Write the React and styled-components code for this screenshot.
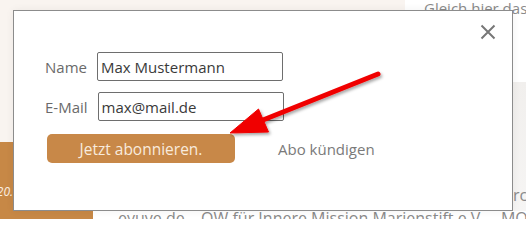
import React from 'react'
import styled, { createGlobalStyle } from 'styled-components'

const GlobalStyle = createGlobalStyle`
    html, body {
        margin: 0;
        padding: 0;
        background: #ffffff;
    }
    body {
        font-family: "Open Sans", "Liberation Sans", sans-serif;
    }
`

const App = () => {
    return (
        <>
            <GlobalStyle />
            <Page>
                <Main>
                    <LeftPane>
                        <OrangeBlock>
                            <Caption><span>Stand 2020.</span></Caption>
                        </OrangeBlock>
                    </LeftPane>
                    <RightPane>
                        <Teaser>Gleich hier das</Teaser>
                        <GreyBox><span>rchiv</span></GreyBox>
                    </RightPane>
                </Main>
                <Footer>
                    <FootOrange />
                    <FootText>eyuve.de – OW für Innere Mission Marienstift e.V. – MOS</FootText>
                </Footer>

                <Modal>
                    <CloseButton aria-label="Schließen">
                        <svg width="16" height="16" viewBox="0 0 16 16">
                            <path d="M1.5 1.5 L14.5 14.5 M14.5 1.5 L1.5 14.5" stroke="#777" strokeWidth="2" fill="none" />
                        </svg>
                    </CloseButton>
                    <Form>
                        <Row>
                            <Label>Name</Label>
                            <Input defaultValue="Max Mustermann" />
                        </Row>
                        <Row>
                            <Label>E-Mail</Label>
                            <Input defaultValue="max@mail.de" />
                        </Row>
                        <Actions>
                            <SubmitButton>Jetzt abonnieren.</SubmitButton>
                            <CancelLink>Abo kündigen</CancelLink>
                        </Actions>
                    </Form>
                </Modal>

                <Arrow width="526" height="219" viewBox="0 0 526 219">
                    <defs>
                        <filter id="shadow" x="-20%" y="-20%" width="140%" height="140%">
                            <feDropShadow dx="1.5" dy="2" stdDeviation="1.5" floodColor="#000" floodOpacity="0.35" />
                        </filter>
                    </defs>
                    <g filter="url(#shadow)" fill="#f00000" stroke="#f00000">
                        <line x1="378" y1="74" x2="258" y2="122" strokeWidth="5" strokeLinecap="round" />
                        <polygon points="230,133 258.5,109 268.5,132" strokeWidth="1" strokeLinejoin="round" />
                    </g>
                </Arrow>
            </Page>
        </>
    )
}

export default App

const Page = styled.div`
    position: relative;
    width: 526px;
    height: 219px;
    overflow: hidden;
    display: flex;
    flex-direction: column;
`

const Main = styled.div`
    display: flex;
    height: 211px;
    flex-shrink: 0;
`

const LeftPane = styled.div`
    width: 405px;
    flex-shrink: 0;
    background: #f9f4f0;
    display: flex;
    flex-direction: column;
    justify-content: flex-end;
`

const OrangeBlock = styled.div`
    width: 93px;
    height: 69px;
    background: #c78846;
    padding-top: 44px;
    box-sizing: border-box;
`

const Caption = styled.div`
    width: 13px;
    display: flex;
    justify-content: flex-end;
    white-space: nowrap;
    font-size: 12px;
    line-height: 12px;
    font-style: italic;
    color: #fbefe2;
`

const RightPane = styled.div`
    flex: 1;
    min-width: 0;
    display: flex;
    flex-direction: column;
`

const Teaser = styled.div`
    height: 82px;
    background: #ffffff;
    padding-left: 19px;
    font-size: 15px;
    line-height: 16px;
    color: #8a8a8a;
    white-space: nowrap;
`

const GreyBox = styled.div`
    flex: 1;
    background: linear-gradient(180deg, #f1efed 0%, #f6f5f4 100%);
    padding: 105px 0 0 108px;
    font-size: 16px;
    line-height: 16px;
    color: #8a8a8a;
    white-space: nowrap;
`

const Footer = styled.div`
    flex: 1;
    display: flex;
`

const FootOrange = styled.div`
    width: 93px;
    flex-shrink: 0;
    background: #c78846;
`

const FootText = styled.div`
    flex: 1;
    min-width: 0;
    padding-left: 25px;
    font-size: 16px;
    line-height: 14px;
    color: #8a8a8a;
    white-space: nowrap;
`

const Modal = styled.div`
    position: absolute;
    top: 10px;
    left: 13px;
    width: 500px;
    height: 201px;
    box-sizing: border-box;
    background: #ffffff;
    border: 1px solid #8c8c8c;
    padding: 41px 0 0 31px;
    box-shadow: 0 0 8px rgba(0, 0, 0, 0.06);
`

const CloseButton = styled.button`
    position: absolute;
    top: 13px;
    right: 16px;
    padding: 0;
    border: none;
    background: none;
    display: flex;
    cursor: pointer;
`

const Form = styled.div`
    display: flex;
    flex-direction: column;
    gap: 11px;
`

const Row = styled.div`
    display: flex;
    align-items: center;
    gap: 10px;
`

const Label = styled.label`
    font-size: 15px;
    color: #6a6a6a;
`

const Input = styled.input`
    width: 186px;
    height: 29px;
    box-sizing: border-box;
    border: 1px solid #6e6e6e;
    border-radius: 2px;
    padding: 0 3px;
    font-family: "Open Sans", "Liberation Sans", sans-serif;
    font-size: 15px;
    color: #3a3a3a;
    outline: none;
`

const Actions = styled.div`
    display: flex;
    align-items: center;
    gap: 43px;
    margin-top: 2px;
    padding-left: 2px;
`

const SubmitButton = styled.button`
    width: 188px;
    height: 29px;
    border: none;
    border-radius: 5px;
    background: #c88848;
    color: #f8ebdd;
    font-family: "Open Sans", "Liberation Sans", sans-serif;
    font-size: 15.5px;
    cursor: pointer;
`

const CancelLink = styled.a`
    font-size: 15px;
    color: #7a7a7a;
    cursor: pointer;
`

const Arrow = styled.svg`
    position: absolute;
    top: 0;
    left: 0;
    pointer-events: none;
`
